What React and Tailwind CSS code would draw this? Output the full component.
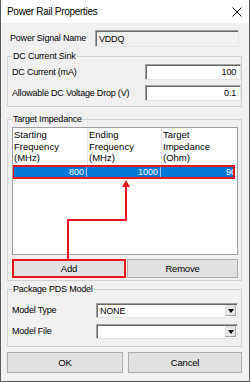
import React from "react";

const font = "font-['Liberation_Sans',Arial,sans-serif]";

function TextBox({ value, className = "", readOnly }) {
  return (
    <div
      className={`flex items-center border border-[#a0a0a0] border-b-[#e3e3e3] border-r-[#e3e3e3] shadow-[inset_1px_1px_0_#696969] ${
        readOnly ? "bg-[#f0f0f0] justify-start pl-[3px]" : "bg-white justify-end pr-[4px]"
      } ${className}`}
    >
      <span className="text-[9px] leading-[10px] text-black">{value}</span>
    </div>
  );
}

function Combo({ value }) {
  return (
    <div className="flex h-[15px] w-[142px] items-center border border-[#a0a0a0] border-b-[#e3e3e3] border-r-[#e3e3e3] bg-white pl-[3px] pr-[1px] shadow-[inset_1px_1px_0_#696969]">
      <span className="flex-1 text-[9px] leading-[10px] text-black">{value}</span>
      <div className="flex h-[11px] w-[11px] items-center justify-center border border-[#dcdcdc] border-b-[#a0a0a0] border-r-[#a0a0a0] bg-[#e8e8e8]">
        <svg width="6" height="4" viewBox="0 0 6 4">
          <path d="M0 0H6L3 4Z" fill="#000" />
        </svg>
      </div>
    </div>
  );
}

function Group({ title, className = "", children }) {
  return (
    <div className={`relative border border-[#d0d0d0] ${className}`}>
      <span className="absolute left-[4px] top-[-6px] bg-[#f0f0f0] px-[1px] text-[9px] leading-[11px] tracking-[-0.2px] text-black">
        {title}
      </span>
      {children}
    </div>
  );
}

function Button({ children, className = "" }) {
  return (
    <div
      className={`flex items-center justify-center border border-[#adadad] bg-[#e1e1e1] text-[9.5px] leading-[10px] text-black ${className}`}
    >
      {children}
    </div>
  );
}

export default function App() {
  return (
    <div
      className={`relative flex h-[382px] w-[250px] flex-col overflow-hidden border-x border-b border-[#5b5b5b] bg-[#f0f0f0] ${font}`}
    >
      {/* Title bar */}
      <div className="flex h-[23px] shrink-0 items-center justify-between bg-white pl-[6px] pr-[7px]">
        <span className="text-[10px] leading-[12px] tracking-[-0.3px] text-black">Power Rail Properties</span>
        <svg width="10" height="10" viewBox="0 0 10 10">
          <path d="M0.5 0.5L9.5 9.5M9.5 0.5L0.5 9.5" stroke="#111" strokeWidth="1" />
        </svg>
      </div>

      <div className="flex flex-col pl-[6px] pr-[7px] tracking-[-0.2px]">
        {/* Power Signal Name */}
        <div className="mt-[7px] flex h-[17px] items-center">
          <span className="w-[88px] pl-[3px] text-[9px] leading-[11px]">Power Signal Name</span>
          <TextBox value="VDDQ" readOnly className="h-[17px] w-[144px]" />
        </div>

        {/* DC Current Sink */}
        <Group title="DC Current Sink" className="mt-[9px] pt-[7px] pb-[5px] pl-[4px]">
          <div className="flex h-[16px] items-center">
            <span className="flex-1 text-[9px] leading-[11px]">DC Current (mA)</span>
            <TextBox value="100" className="h-[16px] w-[96px]" />
          </div>
          <div className="mt-[5px] flex h-[16px] items-center">
            <span className="flex-1 text-[9px] leading-[11px]">Allowable DC Voltage Drop (V)</span>
            <TextBox value="0.1" className="h-[16px] w-[96px]" />
          </div>
        </Group>

        {/* Target Impedance */}
        <Group title="Target Impedance" className="mt-[12px] pt-[7px] pb-[2px] pl-[4px]">
          <div className="h-[128px] w-[226px] overflow-hidden border border-[#a0a0a0] bg-white">
            <div className="flex h-[37px] text-[9.5px] leading-[11.5px] tracking-normal text-black">
              <div className="w-[75px] shrink-0 border-r border-[#e5e5e5] pl-[1px] pt-[1px]">
                Starting
                <br />
                Frequency
                <br />
                (MHz)
              </div>
              <div className="w-[74px] shrink-0 border-r border-[#e5e5e5] pl-[1px] pt-[1px]">
                Ending
                <br />
                Frequency
                <br />
                (MHz)
              </div>
              <div className="flex-1 pl-[1px] pt-[1px]">
                Target
                <br />
                Impedance
                <br />
                (Ohm)
              </div>
            </div>
            <div className="-ml-px flex h-[14px] w-[223px] overflow-hidden border-2 border-[#e8141c] bg-[#0078d7] text-[9px] leading-[10px] tracking-normal text-white">
              <div className="flex w-[73px] shrink-0 items-center justify-end border-r border-[#9cc8ee] pr-[2px]">800</div>
              <div className="flex w-[74px] shrink-0 items-center justify-end border-r border-[#9cc8ee] pr-[2px]">1000</div>
              <div className="flex w-[78px] shrink-0 items-center justify-end pr-[3px]">90</div>
            </div>
          </div>
          <div className="mt-[4px] flex gap-[1px]">
            <Button className="h-[19px] w-[114px] border-2 border-[#e8141c]">Add</Button>
            <Button className="h-[19px] w-[111px]">Remove</Button>
          </div>
        </Group>

        {/* Package PDS Model */}
        <Group title="Package PDS Model" className="mt-[8px] pt-[13px] pb-[7px] pl-[4px]">
          <div className="flex h-[15px] items-center">
            <span className="w-[84px] text-[9px] leading-[11px]">Model Type</span>
            <Combo value="NONE" />
          </div>
          <div className="mt-[6px] flex h-[15px] items-center">
            <span className="w-[84px] text-[9px] leading-[11px]">Model File</span>
            <Combo value="" />
          </div>
        </Group>

        {/* OK / Cancel */}
        <div className="mt-[5px] flex gap-[5px]">
          <Button className="h-[21px] w-[116px]">OK</Button>
          <Button className="h-[21px] w-[114px]">Cancel</Button>
        </div>
      </div>

      {/* Red annotation arrow */}
      <svg
        className="pointer-events-none absolute left-[-1px] top-0"
        width="250"
        height="382"
        viewBox="0 0 250 382"
      >
        <path d="M68 260V220H126V186" fill="none" stroke="#e8141c" strokeWidth="2" />
        <path d="M126 180L122 187H130Z" fill="#e8141c" />
      </svg>
    </div>
  );
}
